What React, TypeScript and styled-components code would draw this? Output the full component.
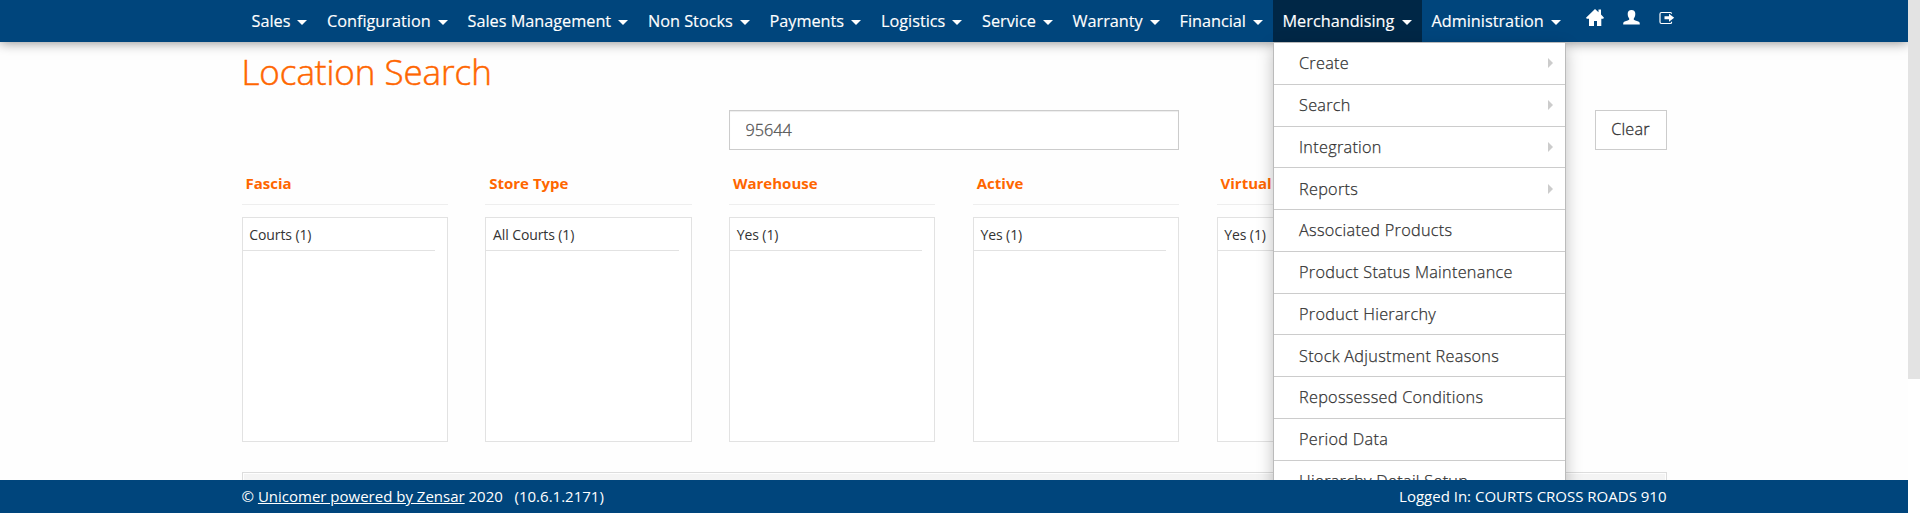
import React from "react";
import styled, { createGlobalStyle } from "styled-components";

const GlobalStyle = createGlobalStyle`
  *, *::before, *::after { box-sizing: border-box; }
  body {
    margin: 0;
    background: #fefefe;
    color: #333;
    font-family: "Open Sans", "Noto Sans", sans-serif;
    font-size: 16.25px;
    overflow: hidden;
  }
`;

const Page = styled.div`
  display: flex;
  height: 513px;
  overflow: hidden;
`;

const Shell = styled.div`
  display: flex;
  flex-direction: column;
  flex: 1;
  min-width: 0;
`;

const ScrollTrack = styled.div`
  position: relative;
  z-index: 4;
  width: 12px;
  background: #fff;
`;

const ScrollThumb = styled.div`
  height: 379px;
  background: #e3e3e3;
`;

const Container = styled.div`
  width: 1425px;
  margin: 0 auto;
`;

const NavBar = styled.header`
  position: relative;
  z-index: 2;
  flex: none;
  height: 42px;
  background: #00457c;
  box-shadow: 0 0 12px rgba(0, 0, 0, 0.5);
`;

const NavList = styled(Container)`
  display: flex;
  height: 42px;
`;

const NavItem = styled.div<{ $active?: boolean; $width: number }>`
  position: relative;
  display: flex;
  align-items: center;
  justify-content: space-between;
  flex: none;
  width: ${(p) => p.$width}px;
  padding: 0 10px;
  color: #fff;
  white-space: nowrap;
  -webkit-text-stroke: 0.15px currentColor;
  background: ${(p) => (p.$active ? "#002746" : "transparent")};
`;

const Caret = styled.span`
  margin-top: 3px;
  border: 5px solid transparent;
  border-top-color: #fff;
  border-bottom: 0;
`;

const NavIcons = styled.div`
  display: flex;
  align-items: flex-start;
  margin-left: 15px;
  gap: 19px;
  padding-top: 9px;
`;

const Menu = styled.ul`
  position: absolute;
  top: 42px;
  left: 0;
  width: 293px;
  margin: 0;
  padding: 0;
  list-style: none;
  background: #fff;
  border: 1px solid #bbb;
  box-shadow: 0 6px 15px rgba(0, 0, 0, 0.25);
`;

const MenuItem = styled.li`
  display: flex;
  align-items: center;
  justify-content: space-between;
  height: 41.75px;
  padding: 0 12px 0 25.5px;
  color: #333;
  font-weight: 300;
  letter-spacing: 0.28px;
  -webkit-text-stroke: 0.25px currentColor;
  border-bottom: 1px solid #ccc;
`;

const SubArrow = styled.span`
  border: 5px solid transparent;
  border-left-color: #ccc;
  border-right: 0;
`;

const Main = styled.main`
  flex: 1;
  min-height: 0;
  overflow: hidden;
`;

const Title = styled.h1`
  margin: 0;
  height: 68px;
  padding-top: 6px;
  color: #ff6600;
  font-size: 35px;
  line-height: 48px;
  font-weight: 300;
  letter-spacing: -0.07px;
  -webkit-text-stroke: 0.5px currentColor;
`;

const SearchRow = styled.div`
  display: flex;
  justify-content: space-between;
  height: 40px;
  padding-left: 487px;
`;

const SearchInput = styled.input`
  width: 450px;
  height: 40px;
  padding: 0 16px;
  color: #555;
  font: 300 16.25px "Open Sans", sans-serif;
  -webkit-text-stroke: 0.3px currentColor;
  background: #fff;
  border: 1px solid #ccc;
  border-radius: 0;
  box-shadow: inset 0 1px 1px rgba(0, 0, 0, 0.075);
  outline: none;
`;

const ClearButton = styled.button`
  width: 72px;
  height: 40px;
  padding: 0 0 2px;
  color: #333;
  font: 300 16.25px "Open Sans", sans-serif;
  letter-spacing: 0.2px;
  -webkit-text-stroke: 0.3px currentColor;
  background: #fff;
  border: 1px solid #ccc;
`;

const Facets = styled.div`
  display: grid;
  grid-template-columns: repeat(6, 206.25px);
  column-gap: 37.5px;
`;

const Facet = styled.section`
  display: flex;
  flex-direction: column;
`;

const FacetTitle = styled.h2`
  margin: 0 0 12px;
  height: 55px;
  padding: 23px 4px 0;
  color: #ff6600;
  font-size: 15px;
  line-height: 21px;
  font-weight: 700;
  border-bottom: 1px solid #eee;
`;

const FacetBox = styled.div`
  height: 225px;
  padding-right: 12px;
  background: #fff;
  border: 1px solid #e2e2e2;
`;

const FacetValue = styled.div`
  height: 33px;
  padding: 0 6.75px;
  color: #333;
  font-size: 14px;
  line-height: 34px;
  letter-spacing: -0.1px;
  border-bottom: 1px solid #e2e2e2;
`;

const Results = styled.div`
  height: 60px;
  margin-top: 30px;
  padding: 1px;
  border: 1px solid #ddd;
`;

const ResultsHead = styled.div`
  height: 50px;
  background: #f4f4f4;
`;

const Footer = styled.footer`
  position: relative;
  z-index: 3;
  flex: none;
  height: 33px;
  color: #fff;
  background: #00457c;
`;

const FooterRow = styled(Container)`
  display: flex;
  justify-content: space-between;
  font-size: 15px;
  line-height: 33px;
  white-space: pre;
`;

const HomeIcon = () => (
  <svg width="18" height="17" viewBox="0 0 18 17" fill="#fff">
    <path d="M9 0 12.500 3.200V.5h2.500v5l3 3.300-.8.900H15.300v7.300h-4.300v-5H8v5H3v-7.300H.8L0 8.800z" />
  </svg>
);

const UserIcon = () => (
  <svg width="17" height="17" viewBox="0 0 17 17" fill="#fff">
    <path d="M8.500 1C11 1 12.300 2.500 12.300 4.800c0 2-.6 3.500-1.500 4.700v1.200c2 1 4.500 1.400 5.400 2.300.5.600.6 1.300.6 2.500H.2c0-1.200.1-1.900.6-2.500.9-.9 3.400-1.300 5.400-2.300V9.500C5.300 8.300 4.700 6.800 4.700 4.800 4.700 2.500 6 1 8.500 1z" />
  </svg>
);

const LogoutIcon = () => (
  <svg width="16" height="17" viewBox="0 0 16 17">
    <path d="M12.500 4.800V4.500Q12.500 3.500 11.500 3.500H2.500Q1 3.500 1 5v8Q1 14.500 2.500 14.500h9q1 0 1-1v-.8" fill="none" stroke="#fff" strokeWidth="1.200" />
    <path d="M5.500 7.300h4.500V4.800l5.200 4-5.200 4v-2.500H5.500z" fill="#fff" />
  </svg>
);

const NAV = [
  { label: "Sales", width: 75.5 },
  { label: "Configuration", width: 140.5 },
  { label: "Sales Management", width: 180.5 },
  { label: "Non Stocks", width: 121.5 },
  { label: "Payments", width: 111.5 },
  { label: "Logistics", width: 101 },
  { label: "Service", width: 90.5 },
  { label: "Warranty", width: 107 },
  { label: "Financial", width: 103 },
  { label: "Merchandising", width: 149 },
  { label: "Administration", width: 149 },
];

const MENU = [
  { label: "Create", sub: true },
  { label: "Search", sub: true },
  { label: "Integration", sub: true },
  { label: "Reports", sub: true },
  { label: "Associated Products" },
  { label: "Product Status Maintenance" },
  { label: "Product Hierarchy" },
  { label: "Stock Adjustment Reasons" },
  { label: "Repossessed Conditions" },
  { label: "Period Data" },
  { label: "Hierarchy Detail Setup" },
];

const FACETS = [
  { title: "Fascia", value: "Courts (1)" },
  { title: "Store Type", value: "All Courts (1)" },
  { title: "Warehouse", value: "Yes (1)" },
  { title: "Active", value: "Yes (1)" },
  { title: "Virtual", value: "Yes (1)" },
];

export default function App() {
  return (
    <Page>
      <GlobalStyle />
      <Shell>
        <NavBar>
          <NavList as="nav">
            {NAV.map(({ label, width }) => (
              <NavItem key={label} $width={width} $active={label === "Merchandising"}>
                {label}
                <Caret />
                {label === "Merchandising" && (
                  <Menu>
                    {MENU.map((item) => (
                      <MenuItem key={item.label}>
                        {item.label}
                        {item.sub && <SubArrow />}
                      </MenuItem>
                    ))}
                  </Menu>
                )}
              </NavItem>
            ))}
            <NavIcons>
              <HomeIcon />
              <UserIcon />
              <LogoutIcon />
            </NavIcons>
          </NavList>
        </NavBar>
        <Main>
          <Container>
            <Title>Location Search</Title>
            <SearchRow>
              <SearchInput defaultValue="95644" />
              <ClearButton>Clear</ClearButton>
            </SearchRow>
            <Facets>
              {FACETS.map((f) => (
                <Facet key={f.title}>
                  <FacetTitle>{f.title}</FacetTitle>
                  <FacetBox>
                    <FacetValue>{f.value}</FacetValue>
                  </FacetBox>
                </Facet>
              ))}
            </Facets>
            <Results>
              <ResultsHead />
            </Results>
          </Container>
        </Main>
        <Footer>
          <FooterRow>
            <span>
              © <u>Unicomer powered by Zensar</u> 2020{"\u00a0\u00a0 "}(10.6.1.2171)
            </span>
            <span>Logged In: COURTS CROSS ROADS 910</span>
          </FooterRow>
        </Footer>
      </Shell>
      <ScrollTrack>
        <ScrollThumb />
      </ScrollTrack>
    </Page>
  );
}
